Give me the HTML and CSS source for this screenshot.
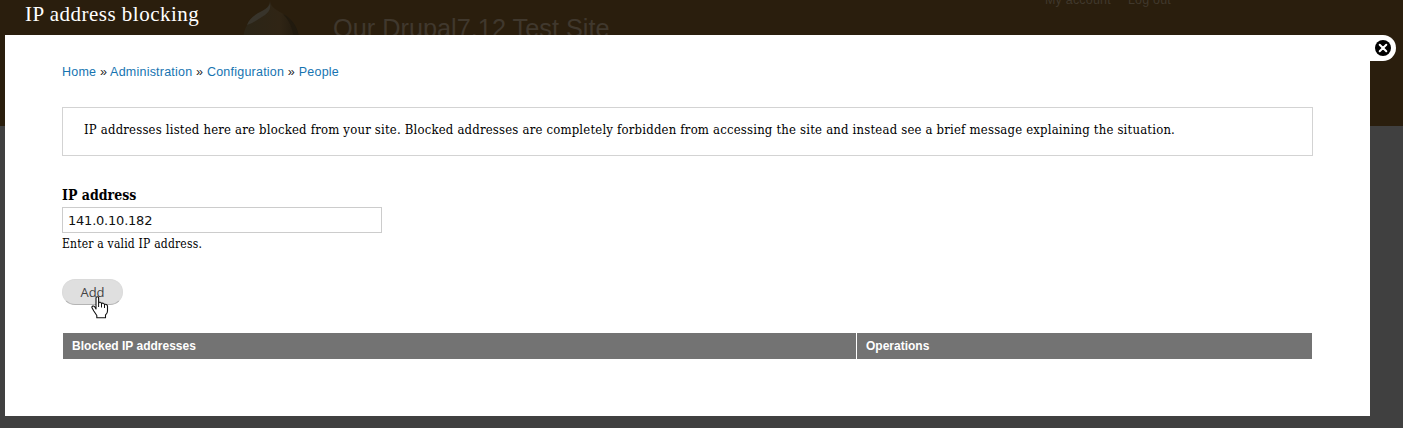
FILE: index.html
```html
<!DOCTYPE html>
<html lang="en">
<head>
<meta charset="utf-8">
<title>IP address blocking</title>
<link rel="stylesheet" href="styles.css">
</head>
<body>
<div class="site">
  <div class="site-header">
    <svg class="site-logo" width="60" height="70" viewBox="0 0 60 70" aria-hidden="true">
      <defs>
        <linearGradient id="drop" x1="0" y1="0" x2="1" y2="0">
          <stop offset="0" stop-color="#2b2517"/>
          <stop offset=".65" stop-color="#302515"/>
          <stop offset="1" stop-color="#211a0e"/>
        </linearGradient>
      </defs>
      <path fill="url(#drop)" d="M29 1C30 8 36 10 44 15C53 21 58 29 58 41C58 57 45 68 30 68S2 57 2 42C2 28 8 20 16 15C24 10 28 7 29 1Z"/>
      <path fill="#211a0e" d="M44 15C52 20 58 29 58 41L54 52C54 35 51 23 42 14Z"/>
      <path fill="#38342b" d="M29 2C29 6 26 8 21 11C13 15 8 19 6 25C12 23 18 19 24 15C28 12 30 9 29 2Z"/>
    </svg>
    <span class="site-name">Our Drupal7.12 Test Site</span>
    <nav class="user-menu"><span>My account</span><span>Log out</span></nav>
  </div>
</div>
<div class="overlay">
  <h1 class="overlay-title">IP address blocking</h1>
  <main class="panel">
    <button class="close" aria-label="Close overlay">
      <svg width="16" height="16" viewBox="0 0 16 16"><circle cx="8" cy="8" r="8" fill="#000"/><path d="M4.700 4.700l6.600 6.600M11.300 4.700l-6.600 6.600" stroke="#fff" stroke-width="2" stroke-linecap="round"/></svg>
    </button>
    <nav class="breadcrumb"><a>Home</a> » <a>Administration</a> » <a>Configuration</a> » <a>People</a></nav>
    <div class="help"><span>IP addresses listed here are blocked from your site. Blocked addresses are completely forbidden from accessing the site and instead see a brief message explaining the situation.</span></div>
    <div class="form">
      <label class="label" for="ip">IP address</label>
      <input class="field" id="ip" type="text" value="141.0.10.182">
      <div class="description">Enter a valid IP address.</div>
      <button class="add">Add
        <svg class="pointer" width="18" height="23" viewBox="0 0 18 23"><path fill="#fff" stroke="#111" stroke-width="1.1" stroke-linejoin="round" d="M5 13V2Q5 .7 6.3 .7T7.6 2V7Q8 6 9.2 6.3T10.500 7.700Q11 6.900 12.200 7.200T13.500 8.700Q14.200 8 15.300 8.500T16.500 10V15Q16.500 17.500 14.500 19V21.800H5.800V19.500L2.800 15L1 11.800Q.6 10.400 1.800 10.100T4 11.200Z"/><path fill="none" stroke="#111" d="M7.600 7v4M10.500 8v3.500M13.500 9v3"/></svg>
      </button>
    </div>
    <div class="table"><div class="th">Blocked IP addresses</div><div class="th">Operations</div></div>
  </main>
</div>
</body>
</html>
```
FILE: styles.css
```css
* { box-sizing: border-box; }
body { margin: 0; height: 428px; overflow: hidden; position: relative; background: #404040; font-family: "Liberation Sans", Arial, sans-serif; }
.site { position: absolute; inset: 0; }
.site-header { height: 126px; background: #2a1e0d; display: flex; align-items: flex-start; padding-left: 241px; }
.site-logo { flex: none; }
.site-name { margin: 13px 0 0 32px; width: 712px; font-size: 25.3px; line-height: 30px; color: #40382d; white-space: nowrap; }
.user-menu { display: flex; gap: 17px; margin-top: -8px; font-size: 12.5px; letter-spacing: .2px; line-height: 16px; color: #40382c; white-space: nowrap; }
.overlay { position: relative; padding: 0 33px 0 5px; }
.overlay-title { margin: 0; height: 35px; padding-left: 20px; font: 400 21px/28px "Liberation Serif", Georgia, serif; letter-spacing: .5px; color: #fff; }
.panel { position: relative; height: 381px; background: #fff; padding: 28px 57px 0; }
.close { position: absolute; left: 100%; top: 0; width: 26px; height: 26px; border: 0; padding: 0 0 0 5px; background: #fff; border-radius: 0 13px 13px 0; display: flex; align-items: center; }
.breadcrumb { height: 44px; font-size: 12.5px; line-height: 18px; letter-spacing: .22px; color: #222; white-space: nowrap; }
.breadcrumb a { color: #1674b1; }
.help { height: 49px; border: 1px solid #d3d3d3; padding: 12px 21px; font: 13px/20px "DejaVu Serif Condensed", "DejaVu Serif", serif; letter-spacing: .194px; color: #000; white-space: nowrap; }
.form { display: flex; flex-direction: column; align-items: flex-start; height: 177px; padding-top: 29px; }
.label { font: 700 14px/20px "DejaVu Serif Condensed", "DejaVu Serif", serif; height: 22px; }
.field { width: 320px; height: 26px; border: 1px solid #ccc; padding: 1px 5px; font: 13px "DejaVu Sans", sans-serif; letter-spacing: -.22px; color: #111; }
.description { height: 46px; padding-top: 2px; font: 12px/18px "DejaVu Serif Condensed", "DejaVu Serif", serif; letter-spacing: .2px; }
.add { position: relative; width: 61px; height: 26px; padding: 0; border: 1px solid #dadada; border-bottom-color: #b4b4b4; border-radius: 13px; background: #dfdfdf; font: 13px "Open Sans", sans-serif; color: #444; }
.pointer { position: absolute; left: 28px; top: 16px; }
.table { display: grid; grid-template-columns: 793px 455px; gap: 1px; padding-left: 1px; }
.th { height: 26px; padding-left: 9px; background: #737373; color: #fff; font-size: 12px; font-weight: 700; line-height: 26px; }
```
